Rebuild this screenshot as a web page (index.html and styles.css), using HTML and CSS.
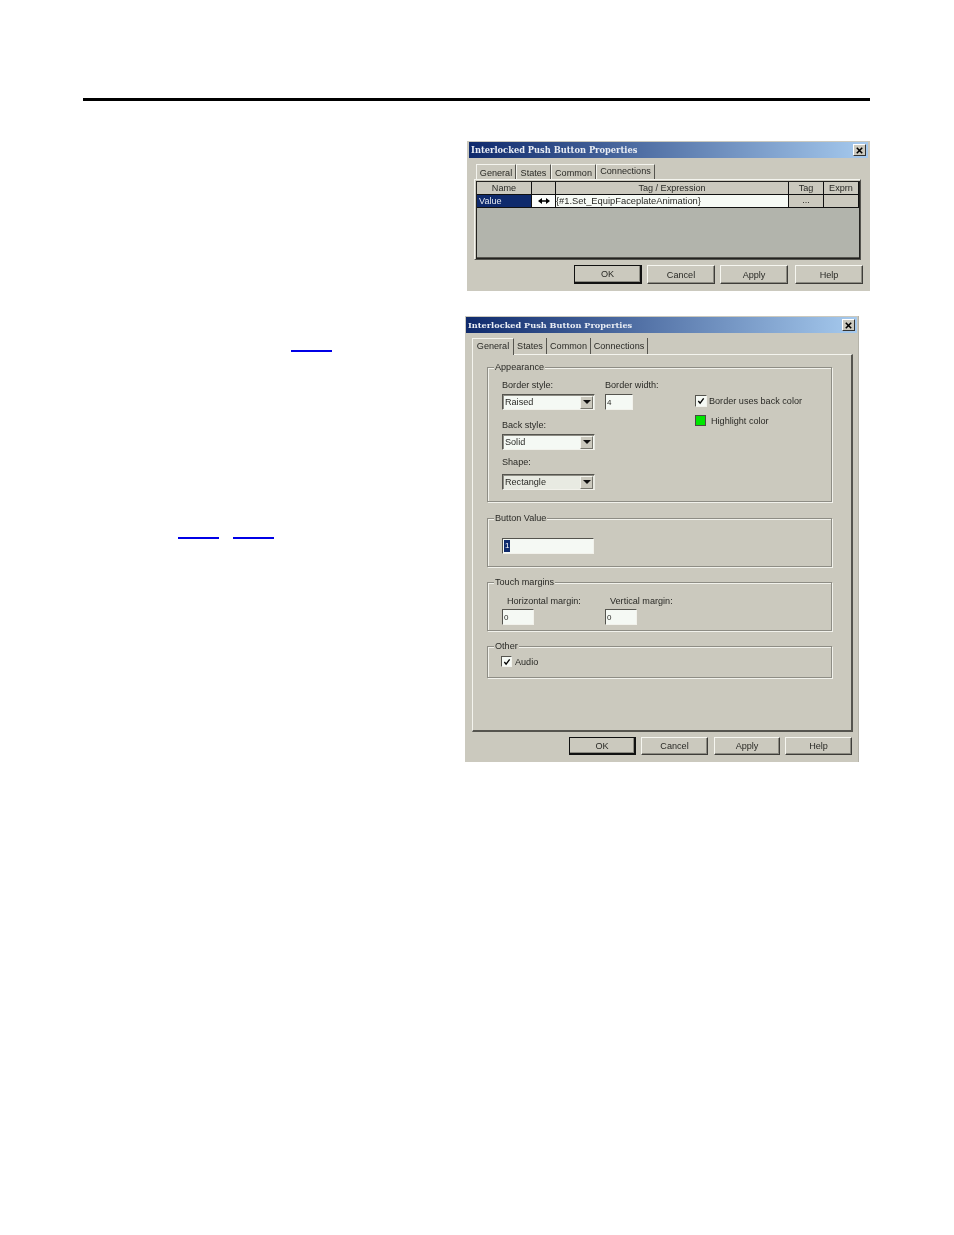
FILE: index.html
```html
<!DOCTYPE html>
<html lang="en">
<head>
<meta charset="utf-8">
<title>Interlocked Push Button Properties</title>
<link rel="stylesheet" href="styles.css">
</head>
<body>
<div class="rule"></div>
<main class="page">
  <div class="text-col">
    <p class="line line-a"><a class="link" href="#a"></a></p>
    <p class="line line-b"><a class="link" href="#b"></a><a class="link link-gap" href="#c"></a></p>
  </div>
  <div class="shots">
    <section class="dialog d1">
      <header class="title"><span>Interlocked Push Button Properties</span><span class="close"><svg viewBox="0 0 9 9" width="7" height="7"><path d="M1 1L8 8M8 1L1 8" stroke="#000" stroke-width="2" fill="none"/></svg></span></header>
      <nav class="tabs t1">
        <span class="tab tg">General</span><span class="tab ts">States</span><span class="tab tc">Common</span><span class="tab tn on">Connections</span>
      </nav>
      <div class="table">
        <div class="frame">
          <div class="row head"><span>Name</span><span></span><span>Tag / Expression</span><span>Tag</span><span>Exprn</span></div>
          <div class="row data"><span class="nm">Value</span><span class="ar"><svg viewBox="0 0 12 6" width="12" height="6"><path d="M0 3L4 0V2.300H8V0L12 3L8 6V3.700H4V6Z" fill="#000"/></svg></span><span class="ex">{#1.Set_EquipFaceplateAnimation}</span><span class="dots">...</span><span class="blank"></span></div>
        </div>
      </div>
      <div class="buttons b1">
        <span class="btn def">OK</span><span class="btn">Cancel</span><span class="btn">Apply</span><span class="btn">Help</span>
      </div>
    </section>

    <section class="dialog d2">
      <header class="title"><span>Interlocked Push Button Properties</span><span class="close"><svg viewBox="0 0 9 9" width="7" height="7"><path d="M1 1L8 8M8 1L1 8" stroke="#000" stroke-width="2" fill="none"/></svg></span></header>
      <nav class="tabs t2">
        <span class="tab on g2">General</span><span class="tab s2">States</span><span class="tab c2">Common</span><span class="tab n2">Connections</span>
      </nav>
      <div class="panel">
        <div class="group g-app">
          <span class="legend">Appearance</span>
          <div class="app-grid">
            <div class="col c-one">
              <label class="lab">Border style:</label>
              <div class="select"><span>Raised</span><i class="drop"></i></div>
              <label class="lab lab2">Back style:</label>
              <div class="select"><span>Solid</span><i class="drop"></i></div>
              <label class="lab lab3">Shape:</label>
              <div class="select sel3"><span>Rectangle</span><i class="drop"></i></div>
            </div>
            <div class="col c-two">
              <label class="lab">Border width:</label>
              <div class="input w28">4</div>
            </div>
            <div class="col c-three">
              <div class="check-row"><span class="check"><svg viewBox="0 0 9 9" width="8" height="8"><path d="M1.500 4.500L3.500 7L7.500 1.500" stroke="#000" stroke-width="1.500" fill="none"/></svg></span><span>Border uses back color</span></div>
              <div class="check-row swatch-row"><span class="swatch"></span><span>Highlight color</span></div>
            </div>
          </div>
        </div>
        <div class="group g-val">
          <span class="legend">Button Value</span>
          <div class="input w92"><span class="sel">1</span></div>
        </div>
        <div class="group g-touch">
          <span class="legend">Touch margins</span>
          <div class="touch">
            <div class="tcol"><label class="lab ind">Horizontal margin:</label><div class="input w32">0</div></div>
            <div class="tcol"><label class="lab ind">Vertical margin:</label><div class="input w32">0</div></div>
          </div>
        </div>
        <div class="group g-other">
          <span class="legend">Other</span>
          <div class="check-row audio"><span class="check small"><svg viewBox="0 0 9 9" width="8" height="8"><path d="M1.500 4.500L3.500 7L7.500 1.500" stroke="#000" stroke-width="1.500" fill="none"/></svg></span><span>Audio</span></div>
        </div>
      </div>
      <div class="buttons b2">
        <span class="btn def">OK</span><span class="btn">Cancel</span><span class="btn">Apply</span><span class="btn">Help</span>
      </div>
    </section>
  </div>
</main>
</body>
</html>
```
FILE: styles.css
```css
* { box-sizing: border-box; }
html, body { margin: 0; padding: 0; background: #fff; }
body { width: 954px; height: 1235px; overflow: hidden; font-family: "Liberation Sans", Arial, sans-serif; }

.rule { height: 3px; margin: 98px 84px 0 83px; background: #000; }

.page { display: flex; padding-top: 40px; }
.text-col { width: 465px; flex: none; }
.line { margin: 0; height: 3px; }
.line-a { margin: 209px 0 0 291px; }
.line-b { margin: 184px 0 0 178px; display: flex; }
.link { display: block; width: 41px; height: 2px; background: #0000e6; }
.link-gap { margin-left: 14px; }

.shots { display: flex; flex-direction: column; align-items: flex-start; }

.dialog { background: #cbc9be; font-size: 9.100px; color: #2a2a26; filter: blur(.38px); }
.d1 { width: 403px; height: 150px; margin-left: 2px; padding: 1px 2px 0; }
.d2 { width: 394px; height: 446px; margin-top: 25px; padding: 1px; border-right: 1px solid #b5b3a9; }

.title { height: 16px; display: flex; align-items: center; justify-content: space-between; padding: 0 2px; color: #e9edf4; font-family: "DejaVu Serif", serif; font-weight: 700; font-size: 8.300px; background: linear-gradient(90deg, #0f2a6c 0%, #a6caee 100%); white-space: nowrap; }
.d2 .title { font-size: 8.200px; }
.close { width: 13px; height: 12px; display: flex; align-items: center; justify-content: center; background: #cbc9be; border: 1px solid; border-color: #fff #333 #333 #fff; }

.tabs { display: flex; align-items: stretch; }
.tab { display: flex; align-items: center; justify-content: center; border-right: 1px solid #55544e; border-left: 1px solid #f4f4ee; border-top: 1px solid #f4f4ee; white-space: nowrap; }
.t1 { height: 15px; margin: 6px 0 0 7px; }
.t1 .tg { width: 40px; padding-top: 2px; } .t1 .ts { width: 35px; padding-top: 2px; } .t1 .tc { width: 45px; padding-top: 2px; } .t1 .tn { width: 59px; padding-bottom: 2px; }
.t2 { height: 16px; margin: 5px 0 0 6px; position: relative; z-index: 1; }
.t2 .g2 { width: 42px; height: 17px; padding-bottom: 3px; background: #cbc9be; }
.t2 .s2 { width: 33px; border-left: none; border-top: none; }
.t2 .c2 { width: 44px; border-left: none; border-top: none; }
.t2 .n2 { width: 57px; border-left: none; border-top: none; }

.table { width: 387px; height: 81px; margin: 0 0 0 5px; padding: 1px; border: 1px solid; border-color: #f4f4ee #55544e #55544e #f4f4ee; }
.frame { width: 384px; height: 78px; border: 1px solid #22221f; background: #b2b4ac; box-shadow: inset 0 -1px 0 #55544e; }
.row { display: grid; grid-template-columns: 55px 24px 233px 35px 35px; height: 13px; border-bottom: 1px solid #111; }
.row > span { display: flex; align-items: center; justify-content: center; border-right: 1px solid #111; background: #cbc9be; white-space: nowrap; }
.data .nm { background: #0f2a6c; color: #e4e8f0; justify-content: flex-start; padding-left: 2px; }
.data .ar { background: #fbfdfb; }
.data .ex { background: #f6faf5; justify-content: flex-start; padding-left: 0; font-size: 9.350px; }
.data .dots { font-weight: 400; padding-bottom: 2px; }

.buttons { display: flex; }
.b1 { margin: 5px 0 0 105px; gap: 5px; }
.b2 { margin: 5px 0 0 103px; gap: 5px; }
.btn { display: flex; align-items: center; justify-content: center; width: 68px; height: 19px; border: 1px solid; border-color: #f6f6f0 #3e3d39 #3e3d39 #f6f6f0; box-shadow: inset -1px -1px 0 #8c8b82; }
.b1 .btn:last-child { margin-left: 2px; }
.btn.def { border: 1px solid #111; border-width: 1px 2px 2px 1px; }
.b2 .btn { height: 18px; width: 67px; }
.b2 .btn:nth-child(3) { margin-left: 1px; width: 66px; }

.panel { width: 381px; height: 378px; margin: 0 0 0 6px; padding: 12px 0 0 14px; border: 1px solid; border-color: #f4f4ee #55544e #55544e #f4f4ee; border-width: 1px 2px 2px 1px; display: flex; flex-direction: column; }
.group { position: relative; width: 345px; border: 1px solid #8e8d85; box-shadow: 1px 1px 0 #f2f2ec, inset 1px 1px 0 #f2f2ec; padding-left: 14px; }
.legend { position: absolute; left: 6px; top: -6px; height: 11px; line-height: 11px; padding: 0 1px; background: #cbc9be; white-space: nowrap; }
.g-app { height: 135px; }
.g-val { height: 49px; margin-top: 16px; padding-top: 19px; }
.g-touch { height: 49px; margin-top: 15px; }
.g-other { height: 32px; margin-top: 15px; }

.app-grid { display: flex; padding-top: 11px; }
.col { display: flex; flex-direction: column; }
.c-one { width: 103px; }
.c-two { width: 90px; }
.lab { display: block; height: 15px; line-height: 13px; white-space: nowrap; }
.lab2 { margin-top: 9px; }
.lab3 { margin-top: 6px; height: 18px; }
.select { position: relative; width: 93px; height: 16px; padding: 0 0 0 2px; display: flex; align-items: center; background: #f5f9f4; border: 1px solid; border-color: #55544e #e8e8e0 #f2f2ec #55544e; box-shadow: inset 1px 1px 0 #8e8d85; }
.sel3 { background: #e8eae2; }
.drop { position: absolute; right: 1px; top: 1px; width: 13px; height: 13px; background: #cbc9be; border: 1px solid; border-color: #f4f4ee #77766e #77766e #f4f4ee; }
.drop::after { content: ""; position: absolute; left: 2px; top: 3px; border: 4px solid transparent; border-top: 4px solid #111; border-bottom: 0; }
.input { height: 16px; padding: 0 0 0 1px; display: flex; align-items: center; background: #f5f9f4; border: 1px solid; border-color: #55544e #f2f2ec #f2f2ec #55544e; font-size: 8px; }
.w28 { width: 28px; } .w92 { width: 92px; } .w32 { width: 32px; }
.sel { background: #0f2a6c; color: #fff; padding: 0 1px; line-height: 12px; }

.c-three { padding-top: 16px; }
.check-row { display: flex; align-items: center; gap: 2px; white-space: nowrap; }
.check { width: 12px; height: 12px; display: flex; align-items: center; justify-content: center; background: #f5f9f4; border: 1px solid; border-color: #55544e #f2f2ec #f2f2ec #55544e; }
.check.small { width: 11px; height: 11px; }
.swatch-row { margin-top: 8px; gap: 5px; }
.swatch { width: 11px; height: 11px; background: #00e600; border: 1px solid #4a4a44; }

.touch { display: flex; padding-top: 11px; }
.tcol { width: 103px; }
.ind { padding-left: 5px; height: 15px; line-height: 15px; }
.audio { padding-top: 9px; margin-left: -1px; gap: 3px; }
```
